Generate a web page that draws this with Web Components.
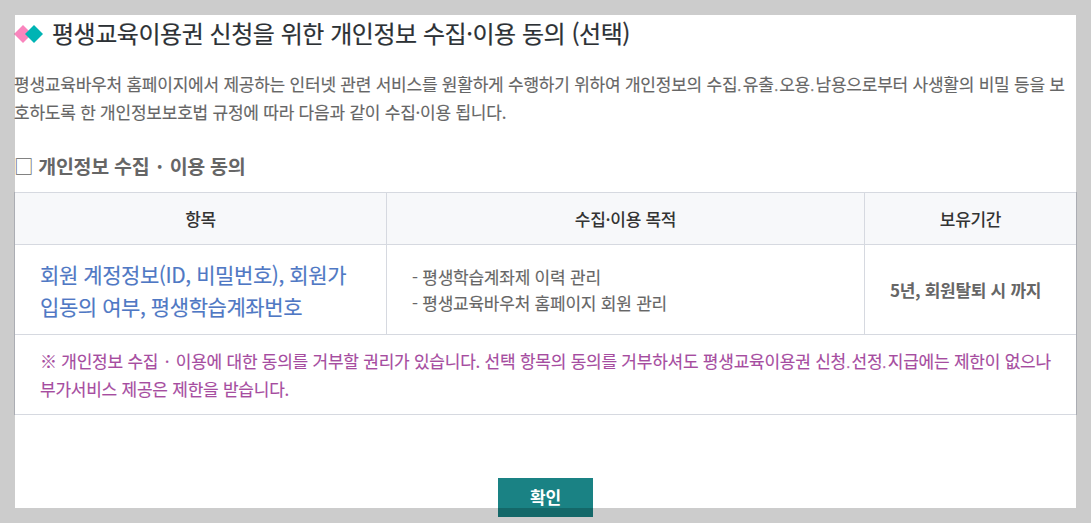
<!DOCTYPE html>
<html lang="ko">
<head>
<meta charset="utf-8">
<title>개인정보 수집·이용 동의</title>
<style>
  body {
    margin: 0;
    height: 523px;
    overflow: hidden;
    font-family: "Noto Sans CJK KR", "Noto Sans KR", sans-serif;
    letter-spacing: -0.23px;
    color: #666;
    background: #fff;
  }

  /* narrow dot between listed words */
  .dot {
    font-style: normal;
    letter-spacing: -1.5px;
    margin-left: -2px;
    -webkit-text-stroke: 0;
    opacity: 0.8;
  }

  .mid {
    font-style: normal;
    margin: 0 2px;
  }
</style>
</head>
<body>
<consent-dialog>
  <consent-title>평생교육이용권 신청을 위한 개인정보 수집·이용 동의 (선택)</consent-title>
  <consent-intro>평생교육바우처 홈페이지에서 제공하는 인터넷 관련 서비스를 원활하게 수행하기 위하여 개인정보의 수집<i class="dot">․</i>유출<i class="dot">․</i>오용<i class="dot">․</i>남용으로부터 사생활의 비밀 등을 보<br>호하도록 한 개인정보보호법 규정에 따라 다음과 같이 수집·이용 됩니다.</consent-intro>
  <consent-heading>개인정보 수집 <i class="mid">·</i> 이용 동의</consent-heading>
  <consent-table>
    <span slot="items">회원 계정정보(ID, 비밀번호), 회원가<br>입동의 여부, 평생학습계좌번호</span>
    <span slot="purpose">- 평생학습계좌제 이력 관리<br>- 평생교육바우처 홈페이지 회원 관리</span>
    <span slot="period">5년, 회원탈퇴 시 까지</span>
    <span slot="note">※ 개인정보 수집 <i class="mid">·</i> 이용에 대한 동의를 거부할 권리가 있습니다. 선택 항목의 동의를 거부하셔도 평생교육이용권 신청<i class="dot">․</i>선정<i class="dot">․</i>지급에는 제한이 없으나<br>부가서비스 제공은 제한을 받습니다.</span>
  </consent-table>
  <confirm-button>확인</confirm-button>
</consent-dialog>

<script>
class ConsentDialog extends HTMLElement {
  constructor() {
    super();
    this.attachShadow({ mode: "open" }).innerHTML = `
      <style>
        :host {
          display: block;
          position: relative;
          box-sizing: border-box;
          height: 523px;
          padding: 15px 14px 0;
          overflow: hidden;
        }

        main {
          display: flex;
          flex-direction: column;
        }

        /* translucent frame drawn over the content */
        .frame {
          position: absolute;
          inset: 0;
          border: 15px solid rgba(0, 0, 0, 0.2);
          pointer-events: none;
        }
      </style>
      <main><slot></slot></main>
      <div class="frame"></div>
    `;
  }
}

class ConsentTitle extends HTMLElement {
  constructor() {
    super();
    this.attachShadow({ mode: "open" }).innerHTML = `
      <style>
        :host {
          display: flex;
          align-items: center;
          gap: 9px;
          height: 38px;
          font-size: 24px;
          line-height: 36px;
          letter-spacing: -0.46px;
          color: #2c3135;
          white-space: nowrap;
          -webkit-text-stroke: 0.2px;
        }

        svg {
          display: block;
          flex: none;
        }

        span {
          margin-top: -3px;
        }
      </style>
      <svg width="29" height="20" viewBox="0 0 29 20">
        <path d="M9 1 18 10 9 19 0 10Z" fill="#f985bd" stroke="none"/>
        <path d="M20 1 29 10 20 19 11 10Z" fill="#00b4b4" stroke="none"/>
      </svg>
      <span><slot></slot></span>
    `;
  }
}

class ConsentIntro extends HTMLElement {
  constructor() {
    super();
    this.attachShadow({ mode: "open" }).innerHTML = `
      <style>
        :host {
          display: block;
          margin-top: 17px;
          font-size: 17px;
          line-height: 28px;
          white-space: nowrap;
          -webkit-text-stroke: 0.15px;
        }
      </style>
      <slot></slot>
    `;
  }
}

class ConsentHeading extends HTMLElement {
  constructor() {
    super();
    this.attachShadow({ mode: "open" }).innerHTML = `
      <style>
        :host {
          display: block;
          margin-top: 25px;
          height: 41px;
          font-size: 19.5px;
          line-height: 30px;
          font-weight: 700;
          letter-spacing: -0.31px;
          white-space: nowrap;
        }

        .box {
          font-weight: 400;
        }
      </style>
      <span class="box">□</span> <slot></slot>
    `;
  }
}

class ConsentTable extends HTMLElement {
  constructor() {
    super();
    this.attachShadow({ mode: "open" }).innerHTML = `
      <style>
        :host {
          display: grid;
          grid-template-columns: 371px 477px 211px;
          grid-template-rows: 51px 89px 79px;
          gap: 1px;
          padding: 1px;
          background: #d6d9e0;
          font-size: 17px;
          white-space: nowrap;
          -webkit-text-stroke: 0.15px;
        }

        div {
          display: flex;
          align-items: center;
          padding: 0 25px;
          background: #fff;
        }

        .head {
          justify-content: center;
          padding: 0;
          background: #f7f8fa;
          color: #333;
          font-weight: 500;
          letter-spacing: -0.3px;
          -webkit-text-stroke: 0;
        }

        .items {
          font-size: 21px;
          line-height: 32px;
          letter-spacing: -0.42px;
          color: #4f78c4;
        }

        .purpose {
          line-height: 26px;
        }

        .period {
          font-weight: 700;
          letter-spacing: -0.3px;
          -webkit-text-stroke: 0;
        }

        .note {
          grid-column: 1 / -1;
          line-height: 28px;
          letter-spacing: -0.24px;
          color: #a64ca0;
        }
      </style>
      <div class="head">항목</div>
      <div class="head">수집·이용 목적</div>
      <div class="head">보유기간</div>
      <div class="items"><slot name="items"></slot></div>
      <div class="purpose"><slot name="purpose"></slot></div>
      <div class="period"><slot name="period"></slot></div>
      <div class="note"><slot name="note"></slot></div>
    `;
  }
}

class ConfirmButton extends HTMLElement {
  constructor() {
    super();
    this.attachShadow({ mode: "open" }).innerHTML = `
      <style>
        :host {
          display: flex;
          justify-content: center;
          margin-top: 63px;
        }

        button {
          width: 95px;
          height: 39px;
          padding: 0 0 2px;
          border: 0;
          background: #1a8284;
          color: #fff;
          font: 700 17px/37px "Noto Sans CJK KR", sans-serif;
          letter-spacing: inherit;
        }
      </style>
      <button type="button"><slot></slot></button>
    `;
  }
}

customElements.define("consent-dialog", ConsentDialog);
customElements.define("consent-title", ConsentTitle);
customElements.define("consent-intro", ConsentIntro);
customElements.define("consent-heading", ConsentHeading);
customElements.define("consent-table", ConsentTable);
customElements.define("confirm-button", ConfirmButton);
</script>
</body>
</html>
